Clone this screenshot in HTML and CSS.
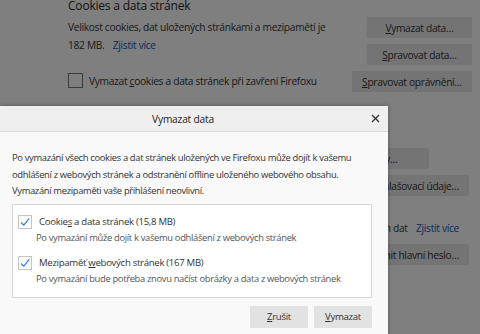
FILE: index.html
```html
<!DOCTYPE html>
<html lang="cs">
<head>
    <meta charset="UTF-8">
    <title>Vymazat data</title>
    <link rel="stylesheet" href="styles.css">
</head>
<body>
    <!-- Preferences page behind the dialog -->
    <div class="page">
        <h2 class="title">Cookies a data stránek</h2>
        <div class="row">
            <div class="info">
                <p class="text">Velikost cookies, dat uložených stránkami a mezipamětí je<br>182 MB. <a class="link">Zjistit více</a></p>
                <label class="check-line">
                    <span class="box"></span>
                    <span>Vymazat <u>c</u>ookies a data stránek při zavření Firefoxu</span>
                </label>
            </div>
            <div class="actions">
                <button class="btn"><u>V</u>ymazat data…</button>
                <button class="btn"><u>S</u>pravovat data…</button>
                <button class="btn"><u>S</u>pravovat oprávnění…</button>
            </div>
        </div>

        <div class="logins">
            <div class="line line-exceptions">
                <span>Ptát se na uložení přihlašovacích údajů</span>
                <button class="btn">Výjimky…</button>
            </div>
            <div class="line">
                <span>Automaticky vyplňovat přihlašovací údaje</span>
                <button class="btn">Uložené přihlašovací údaje…</button>
            </div>
            <div class="line line-text">
                <span>Hlavní heslo chrání vaše uložená hesla a ochranu přihlašovacích dat <a class="link">Zjistit více</a></span>
            </div>
            <div class="line">
                <span>Používat hlavní heslo</span>
                <button class="btn">Změnit hlavní heslo…</button>
            </div>
        </div>
    </div>

    <div class="overlay"></div>

    <!-- Clear data dialog -->
    <div class="dialog">
        <div class="dialog-head">
            <span class="dialog-title">Vymazat data</span>
            <span class="close">
                <svg width="9" height="9" viewBox="0 0 9 9"><path d="M1 1 L8 8 M8 1 L1 8" stroke="#333" stroke-width="1.3"/></svg>
            </span>
        </div>
        <div class="dialog-body">
            <p class="intro">Po vymazání všech cookies a dat stránek uložených ve Firefoxu může dojít k vašemu odhlášení z webových stránek a odstranění offline uloženého webového obsahu. Vymazání mezipaměti vaše přihlášení neovlivní.</p>

            <div class="options">
                <div class="option">
                    <label class="option-label">
                        <span class="cb">
                            <svg width="12" height="12" viewBox="0 0 12 12"><path d="M2 6.5 L4.8 9.2 L10.2 2.3" fill="none" stroke="#2f7fdc" stroke-width="1.2"/></svg>
                        </span>
                        <span>Cookie<u>s</u> a data stránek (15,8 MB)</span>
                    </label>
                    <div class="option-desc">Po vymazání může dojít k vašemu odhlášení z webových stránek</div>
                </div>
                <div class="option">
                    <label class="option-label">
                        <span class="cb">
                            <svg width="12" height="12" viewBox="0 0 12 12"><path d="M2 6.5 L4.8 9.2 L10.2 2.3" fill="none" stroke="#2f7fdc" stroke-width="1.2"/></svg>
                        </span>
                        <span>Mezipaměť <u>w</u>ebových stránek (167 MB)</span>
                    </label>
                    <div class="option-desc">Po vymazání bude potřeba znovu načíst obrázky a data z webových stránek</div>
                </div>
            </div>

            <div class="dialog-buttons">
                <button class="dbtn"><u>Z</u>rušit</button>
                <button class="dbtn"><u>V</u>ymazat</button>
            </div>
        </div>
    </div>
</body>
</html>
```

FILE: styles.css
```css
/* General */
body {
    margin: 0;
    width: 480px;
    height: 334px;
    overflow: hidden;
    background: #fff;
    font-family: "Open Sans", "Noto Sans", sans-serif;
    color: #2b2b2b;
    position: relative;
}

u {
    text-decoration: underline;
    text-underline-offset: 1px;
}

/* Page behind */
.page {
    padding: 0 8px 0 68px;
    white-space: nowrap;
}

.title {
    margin: 0;
    padding-top: 1px;
    font-size: 12px;
    letter-spacing: -0.2px;
    font-weight: normal;
    line-height: 10px;
    height: 10px;
    color: #1f1f1f;
}

.row {
    display: flex;
    justify-content: space-between;
}

.info {
    flex: 1;
    min-width: 0;
}

.text {
    margin: 7px 0 0;
    font-size: 10.2px;
    letter-spacing: -0.3px;
    line-height: 18px;
    color: #333;
}

.link {
    color: #1850b8;
    margin-left: 6px;
}

.check-line {
    display: flex;
    align-items: center;
    gap: 6px;
    margin-top: 19px;
    font-size: 10.2px;
    letter-spacing: -0.3px;
    color: #333;
}

.box {
    width: 13px;
    height: 13px;
    border: 1px solid #777;
    background: #fff;
    flex: none;
}

.actions {
    display: flex;
    flex-direction: column;
    align-items: flex-end;
    gap: 6px;
    padding-top: 6px;
}

.btn {
    min-width: 105px;
    height: 21px;
    padding: 0 10px;
    border: none;
    background: #e8e8e8;
    font-family: inherit;
    font-size: 10.2px;
    letter-spacing: -0.3px;
    color: #333;
}

.logins {
    display: flex;
    flex-direction: column;
    padding-top: 56px;
    padding-right: 3px;
}

.line {
    display: flex;
    justify-content: space-between;
    align-items: center;
    font-size: 10.2px;
    letter-spacing: -0.3px;
    color: #333;
    margin-bottom: 6px;
}

.line-exceptions {
    padding-right: 40px;
}

.line-text {
    justify-content: flex-end;
    padding-right: 10px;
    margin: 19px 0 9px;
    line-height: 14px;
}

.overlay {
    position: absolute;
    inset: 0;
    background: rgba(0, 0, 0, 0.5);
}

/* Dialog */
.dialog {
    position: absolute;
    left: 0;
    top: 106px;
    width: 388px;
    height: 240px;
    background: #f9f9f9;
    box-shadow: 0 0 4px rgba(0, 0, 0, 0.35);
    white-space: nowrap;
}

.dialog-head {
    height: 25px;
    background: #efefef;
    border-bottom: 1px solid #dadada;
    display: flex;
    align-items: center;
    justify-content: center;
    position: relative;
    padding-right: 22px;
}

.dialog-title {
    font-size: 10.2px;
    letter-spacing: -0.2px;
    color: #222;
}

.close {
    position: absolute;
    right: 8px;
    top: 8px;
    line-height: 0;
}

.dialog-body {
    padding: 0 12px;
}

.intro {
    margin: 18px 0 4px;
    width: 350px;
    white-space: normal;
    font-size: 9.4px;
    letter-spacing: -0.33px;
    line-height: 16.5px;
    color: #333;
}

.options {
    width: 360px;
    box-sizing: border-box;
    background: #fff;
    border: 1px solid #d6d6d6;
    padding: 9px 0 11px 5px;
}

.option + .option {
    margin-top: 10px;
}

.option-label {
    display: flex;
    align-items: center;
    gap: 7px;
    height: 16px;
    font-size: 9.6px;
    letter-spacing: -0.3px;
    color: #333;
}

.cb {
    width: 12px;
    height: 12px;
    border: 1px solid #c4c4c4;
    background: #fff;
    line-height: 0;
    flex: none;
}

.option-desc {
    padding-left: 18px;
    line-height: 15px;
    font-size: 9.4px;
    letter-spacing: -0.33px;
    color: #555;
}

.dialog-buttons {
    display: flex;
    justify-content: flex-end;
    gap: 6px;
    width: 360px;
    margin-top: 8px;
}

.dbtn {
    width: 58px;
    height: 22px;
    border: none;
    background: #e2e2e2;
    font-family: inherit;
    font-size: 9.6px;
    letter-spacing: -0.3px;
    color: #333;
}
```
